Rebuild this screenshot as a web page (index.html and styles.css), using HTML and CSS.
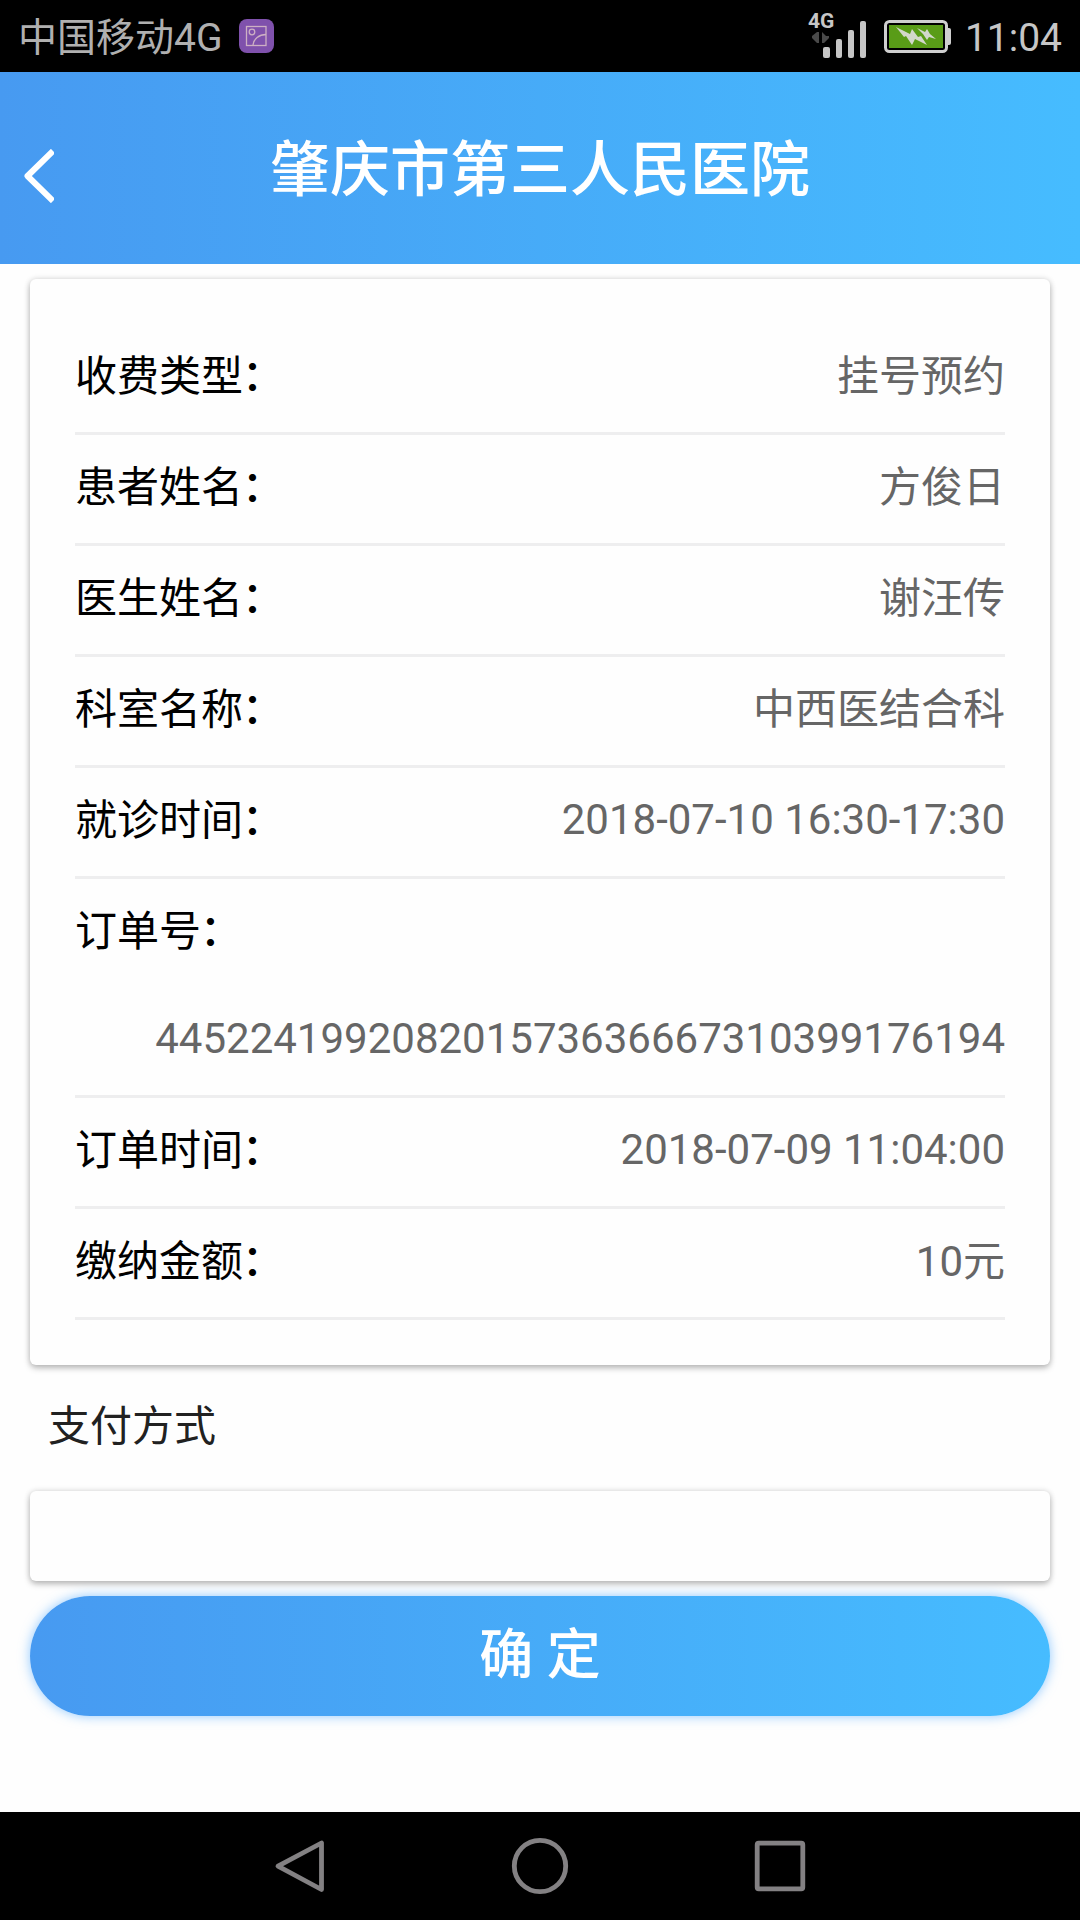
FILE: index.html
```html
<!DOCTYPE html>
<html lang="zh-CN">
<head>
    <meta charset="UTF-8">
    <meta name="viewport" content="width=device-width, initial-scale=1.0">
    <title>肇庆市第三人民医院</title>
    <link rel="stylesheet" href="styles.css">
</head>
<body>
    <div class="status-bar">
        <span class="carrier">中国移动4G</span>
        <svg class="app-icon" width="35" height="34" viewBox="0 0 35 34" fill="none">
            <rect width="35" height="34" rx="8" fill="#7f51ac"/>
            <rect x="7.5" y="7.5" width="19.5" height="19" stroke="#cdb0c4" stroke-width="1.3"/>
            <circle cx="13" cy="13" r="2.8" stroke="#cdb0c4" stroke-width="1.3"/>
            <path d="M14 26C14.5 20 20 15.5 27 15.5" stroke="#cdb0c4" stroke-width="1.3"/>
        </svg>
        <div class="status-right">
            <div class="signal">
                <span class="signal-type">4G</span>
                <svg width="60" height="46" viewBox="0 0 60 46">
                    <path d="M11 19V30H9L4 25V23L9 19ZM14 19V30H16L21 25V23H18Z" fill="#4a4a4a"/>
                    <g fill="#c6c6c6">
                        <rect x="15" y="34" width="7" height="11" rx="2"/>
                        <rect x="28" y="26" width="6" height="19" rx="2"/>
                        <rect x="40" y="17" width="6" height="28" rx="2"/>
                        <rect x="52" y="8" width="6" height="37" rx="2"/>
                    </g>
                </svg>
            </div>
            <svg class="battery" width="68" height="34" viewBox="0 0 68 34">
                <rect x="1.5" y="1.5" width="61" height="30" rx="4" fill="none" stroke="#cfcfcf" stroke-width="3"/>
                <path d="M64 8H65Q67 8 67 10V23Q67 25 65 25H64Z" fill="#cfcfcf"/>
                <rect x="5" y="5" width="54" height="23" fill="#599c17"/>
                <path d="M12 7L26 14L28 9L34 17L37 16L43 25L31 19L28 25L22 16L20 17ZM33 8L41 12L43 9L46 14L52 19L45 17L43 20L39 14Z" fill="#d2d8ca"/>
            </svg>
            <span class="clock">11:04</span>
        </div>
    </div>

    <header>
        <a class="back">
            <svg width="30" height="54" viewBox="0 0 30 54">
                <path d="M29 2L3.5 27L29 52" stroke="white" stroke-width="6" stroke-linejoin="round" fill="none"/>
            </svg>
        </a>
        <h1>肇庆市第三人民医院</h1>
    </header>

    <main>
        <div class="card order">
            <div class="row"><label>收费类型<i>：</i></label><span>挂号预约</span></div>
            <div class="row"><label>患者姓名<i>：</i></label><span>方俊日</span></div>
            <div class="row"><label>医生姓名<i>：</i></label><span>谢汪传</span></div>
            <div class="row"><label>科室名称<i>：</i></label><span>中西医结合科</span></div>
            <div class="row"><label>就诊时间<i>：</i></label><span class="num">2018-07-10 16:30-17:30</span></div>
            <div class="row row-wrap"><label>订单号<i>：</i></label><span class="num">445224199208201573636667310399176194</span></div>
            <div class="row"><label>订单时间<i>：</i></label><span class="num">2018-07-09 11:04:00</span></div>
            <div class="row"><label>缴纳金额<i>：</i></label><span>10元</span></div>
        </div>

        <h2>支付方式</h2>
        <div class="card pay-list"></div>

        <button class="submit">确 定</button>
    </main>

    <nav class="nav-bar">
        <svg viewBox="0 0 60 60"><path d="M51.5 7V53.5L8 30.2Z"/></svg>
        <svg viewBox="0 0 60 60"><circle cx="30" cy="30" r="25.7"/></svg>
        <svg viewBox="0 0 60 60"><rect x="7.2" y="7.2" width="45.6" height="45.6" rx="1.5"/></svg>
    </nav>
</body>
</html>
```
FILE: styles.css
```css
:root {
    --gradient: linear-gradient(90deg, #479af1 0%, #46bcff 100%);
    --line: #eeeeef;
    --text-gray: #666;
}

* {
    box-sizing: border-box;
}

body {
    margin: 0;
    height: 1920px;
    display: flex;
    flex-direction: column;
    background: #fefefe;
    color: #000;
    font-family: Roboto, 'Noto Sans CJK SC', sans-serif;
    font-size: 42px;
}

.status-bar {
    height: 72px;
    padding: 0 18px;
    display: flex;
    align-items: center;
    background: #000;
    color: #b0b0b0;
}

.carrier {
    padding-top: 4px;
    font-size: 39px;
    line-height: 68px;
}

.app-icon {
    margin-left: 17px;
}

.status-right {
    margin-left: auto;
    display: flex;
    align-items: center;
    color: #c6c6c6;
}

.signal {
    position: relative;
    height: 46px;
}

.signal svg {
    display: block;
}

.signal-type {
    position: absolute;
    left: 0;
    top: -2px;
    font-size: 21px;
    line-height: 20px;
    font-weight: 700;
}

.battery {
    margin: 2px 13px 0 16px;
}

.clock {
    padding-top: 3px;
    font-size: 39px;
}

header {
    position: relative;
    height: 192px;
    background: var(--gradient);
    color: #fff;
}

.back {
    position: absolute;
    left: 24px;
    top: 77px;
}

.back svg {
    display: block;
}

h1 {
    margin: 0;
    padding-top: 5px;
    font-size: 60px;
    line-height: 187px;
    font-weight: 500;
    text-align: center;
}

main {
    flex: 1;
    padding: 15px 30px 0;
}

.card {
    background: #fefefe;
    border-radius: 6px;
    box-shadow: 0 3px 6px rgba(0, 0, 0, 0.25), 0 0 6px rgba(0, 0, 0, 0.12);
}

.order {
    padding: 45px;
}

.row {
    display: flex;
    justify-content: space-between;
    border-bottom: 3px solid var(--line);
    line-height: 106px;
}

.row label,
.row span {
    height: 108px;
}

.row label i {
    margin-left: -1px;
    font-style: normal;
    font-weight: 500;
    line-height: 1;
    vertical-align: 1px;
}

.row span {
    color: var(--text-gray);
}

.row .num {
    line-height: 104px;
}

.row-wrap {
    flex-wrap: wrap;
}

.row-wrap span {
    width: 100%;
    text-align: right;
}

h2 {
    margin: 0;
    height: 126px;
    padding-left: 18px;
    font-size: 42px;
    line-height: 124px;
    font-weight: 400;
    color: #212121;
}

.pay-list {
    height: 90px;
}

.submit {
    display: block;
    width: 100%;
    height: 120px;
    margin-top: 15px;
    padding: 0 0 12px;
    border: none;
    border-radius: 60px;
    background: var(--gradient);
    box-shadow: 0 0 12px rgba(70, 165, 255, 0.6);
    color: #fff;
    font-family: inherit;
    font-size: 54px;
    font-weight: 500;
}

.nav-bar {
    height: 108px;
    display: flex;
    justify-content: center;
    gap: 180px;
    align-items: center;
    background: #000;
}

.nav-bar svg {
    width: 60px;
    height: 60px;
    fill: none;
    stroke: #838183;
    stroke-width: 4.8;
    stroke-linejoin: round;
}
```
